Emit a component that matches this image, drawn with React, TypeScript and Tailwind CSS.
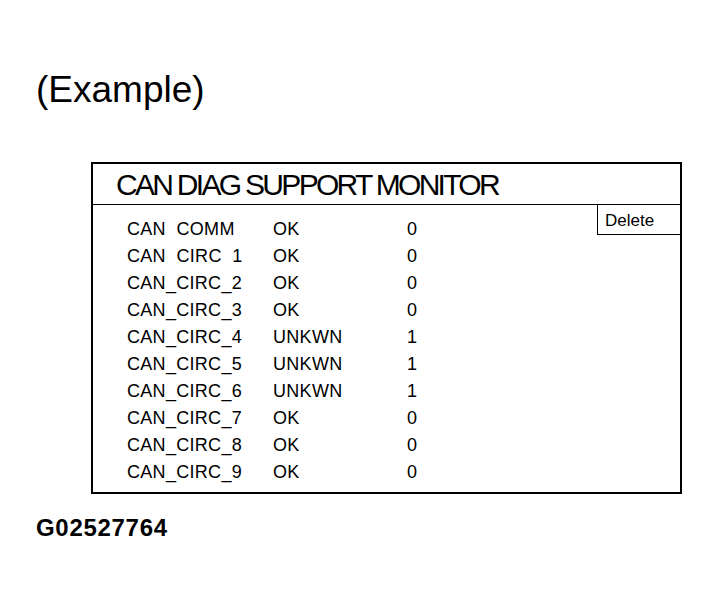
const rows: [string, string, string][] = [
  ["CAN  COMM", "OK", "0"],
  ["CAN  CIRC  1", "OK", "0"],
  ["CAN_CIRC_2", "OK", "0"],
  ["CAN_CIRC_3", "OK", "0"],
  ["CAN_CIRC_4", "UNKWN", "1"],
  ["CAN_CIRC_5", "UNKWN", "1"],
  ["CAN_CIRC_6", "UNKWN", "1"],
  ["CAN_CIRC_7", "OK", "0"],
  ["CAN_CIRC_8", "OK", "0"],
  ["CAN_CIRC_9", "OK", "0"],
];

export default function App() {
  return (
    <div className="min-h-[614px] w-[720px] bg-white pt-[70px] pl-[36px] text-black font-['Liberation_Sans',Arial,sans-serif]">
      <div className="h-[40px] text-[37px] leading-[40px]">(Example)</div>

      <div className="ml-[55px] mt-[52px] w-[591px] h-[332px] border-2 border-black flex flex-col">
        <div className="h-[41px] shrink-0 border-b border-black pl-[23px] text-[30px] leading-[42px] tracking-[-2.7px]">
          CAN DIAG SUPPORT MONITOR
        </div>
        <div className="flex flex-1">
          <div className="flex-1 pt-[11px] pl-[34px] text-[18px] tracking-[0.3px]">
            {rows.map(([name, status, count]) => (
              <div key={name} className="flex h-[27px] items-center">
                <span className="w-[146px] whitespace-pre">{name}</span>
                <span className="w-[134px]">{status}</span>
                <span>{count}</span>
              </div>
            ))}
          </div>
          <div className="self-start w-[83px] h-[30px] border-l border-b border-black pl-[7px] text-[17px] leading-[32px]">
            Delete
          </div>
        </div>
      </div>

      <div className="mt-[21px] text-[24px] font-bold leading-[26px] tracking-[0.7px]">G02527764</div>
    </div>
  );
}
